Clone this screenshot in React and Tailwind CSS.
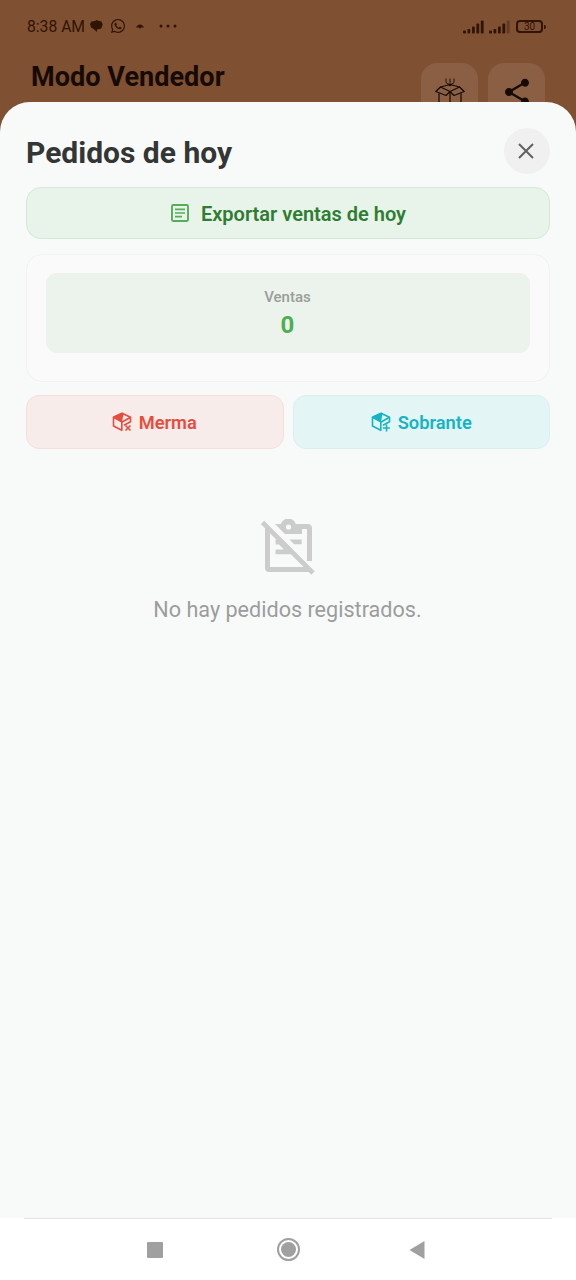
import React from "react";
import { FaWhatsapp } from "react-icons/fa";
import { MdShare } from "react-icons/md";

const SignalBars = ({ faded }) => (
    <svg width="21" height="14" viewBox="0 0 21 14" fill="currentColor">
        <rect x="0" y="10.5" width="3" height="3" rx="1" />
        <rect x="4.5" y="9" width="2.8" height="4.5" rx="1" />
        <rect x="9" y="6.5" width="2.8" height="7" rx="1" />
        <rect x="13.4" y="3.5" width="2.8" height="10" rx="1" />
        <rect x="17.8" y="0.5" width="2.8" height="13" rx="1" opacity={faded ? 0.35 : 1} />
    </svg>
);

const OpenBoxIcon = () => (
    <svg width="30" height="34" viewBox="0 0 30 34" fill="none" stroke="currentColor" strokeWidth="1.2" strokeLinejoin="round" strokeLinecap="round">
        <path d="M15 1v6M11 1v3.500L15 8l4-3.500V1M13 5.500l2 2.500 2-2.500" strokeWidth="0.9" />
        <path d="M15 13.500 5.500 9 .8 13.500 11 17.500zM15 13.500 24.500 9l4.700 4.500L19 17.500z" />
        <path d="M5.500 9 15 6.500 24.500 9M4 15.500V29l11 4 11-4V15.500M15 13.500V33" />
    </svg>
);

const ReceiptIcon = () => (
    <svg width="18" height="18" viewBox="0 0 18 18" fill="none" stroke="currentColor">
        <rect x="1" y="1" width="16" height="16" rx="1.2" strokeWidth="1.9" />
        <path d="M4 5.300h10M4 9h10M4 12.700h7" strokeWidth="1.7" />
    </svg>
);

const PackageIcon = ({ children }) => (
    <svg width="20" height="20" viewBox="0 0 20 20" fill="none" stroke="currentColor" strokeWidth="1.6" strokeLinejoin="round">
        <path d="M1.500 5.300 10 1.300 18.500 5.300V9.800L12 13.200" />
        <path d="M1.500 5.300V14L9.800 18.300V10.300L18.500 5.300" />
        <path d="M1.500 5.300 9.200 9.500 10.800 1.500z" fill="currentColor" />
        {children}
    </svg>
);

const ClipboardOffIcon = () => (
    <svg width="54" height="56" viewBox="0 0 54 56" fill="none" stroke="currentColor">
        <path d="M6.500 8v41a1.500 1.500 0 0 0 1.500 1.500h40" strokeWidth="5" />
        <path d="M42 7.500h5a1.500 1.500 0 0 1 1.500 1.500v33" strokeWidth="5" />
        <path d="M14 5h6a7.800 7.800 0 0 1 14.800 0H46v5h-5v5H24z" fill="currentColor" stroke="none" />
        <circle cx="27.5" cy="8" r="2.6" className="fill-[#f8faf9]" stroke="none" />
        <path d="M28.500 20.500h12.200v4.800h-7.500z" fill="currentColor" stroke="none" />
        <path d="M14.500 20.500h7l10 10v4.800h-17v-4.800h8.500l-5-5h-3.500z" fill="currentColor" stroke="none" />
        <path d="M1.500 3.500 52 54" strokeWidth="4.6" />
    </svg>
);

const StatusBar = () => (
    <div className="flex h-13 items-center justify-between pt-px pr-[30px] pl-[27px] text-[#301404]">
        <div className="flex items-center">
            <span className="w-[58px] pt-px text-[15.7px] whitespace-nowrap">8:38 AM</span>
            <svg className="ml-[5px]" width="13" height="12" viewBox="0 0 13 12" fill="currentColor">
                <path d="M1.500 1.500 5 1 6.500 0l2 .8 3 .7 1.200 3-1.400 4L7 9.500V12L3 8.500 1 7.500 0 4z" />
            </svg>
            <FaWhatsapp className="ml-[7px] size-[16px]" />
            <svg className="ml-[10px]" width="8" height="5" viewBox="0 0 8 5" fill="currentColor">
                <path d="M0 3.500C1 1.500 2.500.5 4 .5s3 1 4 3H5L4 5 3 3.500z" />
            </svg>
            <svg className="ml-[15px]" width="18" height="4" viewBox="0 0 18 4" fill="currentColor">
                <circle cx="2" cy="2" r="1.5" />
                <circle cx="9" cy="2" r="1.5" />
                <circle cx="16" cy="2" r="1.5" />
            </svg>
        </div>
        <div className="flex items-center">
            <SignalBars />
            <span className="w-[5px]" />
            <SignalBars faded />
            <div className="ml-[6px] flex h-[13px] w-[27px] items-center justify-center rounded-[4px] border-2 border-current text-[10px] leading-none">30</div>
            <div className="ml-px h-1 w-[2px] rounded-r bg-current" />
        </div>
    </div>
);

const AppHeader = () => (
    <header className="h-[140px] bg-[#7f5031]">
        <StatusBar />
        <div className="flex justify-between px-[31px] text-[#160b04]">
            <h1 className="mt-[9px] text-[27.1px] leading-8 font-bold whitespace-nowrap">Modo Vendedor</h1>
            <div className="mt-[11px] flex gap-[10px]">
                <div className="flex size-[57px] justify-center rounded-[16px] bg-[#8a5f43] pt-[15px]">
                    <OpenBoxIcon />
                </div>
                <div className="flex size-[57px] items-center justify-center rounded-[16px] bg-[#8a5f43]">
                    <MdShare className="size-8" />
                </div>
            </div>
        </div>
    </header>
);

const NavBar = () => (
    <nav className="h-[62px] bg-white px-6">
        <div className="flex h-full items-center border-t border-[#e2e4e3] pl-[123px] text-[#a0a0a0]">
            <div className="size-[16px] rounded-[1px] bg-current" />
            <div className="ml-[114px] flex size-[23px] items-center justify-center rounded-full border-2 border-current">
                <div className="size-[15px] rounded-full bg-current" />
            </div>
            <svg className="ml-[109px]" width="16" height="18" viewBox="0 0 16 18" fill="currentColor">
                <path d="M.500 9 15.500 0v18z" />
            </svg>
        </div>
    </nav>
);

export default function App() {
    return (
        <div className="flex h-[1280px] w-[576px] flex-col overflow-hidden bg-white font-[Roboto,sans-serif]">
            <AppHeader />
            <main className="relative -mt-[38px] flex flex-1 flex-col rounded-t-[30px] bg-[#f8faf9] px-[26px] pt-[26px]">
                <div className="flex h-[46px] items-center justify-between">
                    <h2 className="pt-[3px] text-[30px] leading-9 font-bold whitespace-nowrap text-[#333635]">Pedidos de hoy</h2>
                    <button className="flex size-[46px] items-center justify-center rounded-full bg-[#f0f0f0] pr-[2px] pb-px text-[#626262]">
                        <svg width="16" height="16" viewBox="0 0 16 16" fill="none" stroke="currentColor" strokeWidth="2">
                            <path d="m1 1 14 14M15 1 1 15" />
                        </svg>
                    </button>
                </div>

                <button className="mt-[13px] flex h-[52px] items-center justify-center rounded-[15px] border border-[#d5e7d9] bg-[#e8f3ea] text-[#2e7d32]">
                    <span className="pl-px text-[#55ad5a]"><ReceiptIcon /></span>
                    <span className="ml-[12px] pt-[2px] text-xl font-semibold whitespace-nowrap">Exportar ventas de hoy</span>
                </button>

                <section className="mt-[15px] h-[128px] rounded-[16px] border border-[#f0f3f1] bg-[#fafafa] px-[19px] pt-[18px]">
                    <div className="flex h-[80px] flex-col items-center rounded-[11px] bg-[#ebf3ec] pt-[14px] pr-px">
                        <span className="text-[15px] leading-5 font-medium text-[#999e9a]">Ventas</span>
                        <span className="mt-[4px] text-2xl leading-7 font-bold text-[#4caf50]">0</span>
                    </div>
                </section>

                <div className="mt-[13px] grid grid-cols-2 gap-[9px]">
                    <button className="flex h-[54px] items-center justify-center rounded-[13px] border border-[#f4dfdd] bg-[#f8eceb] pr-px text-[#e74c3c]">
                        <PackageIcon>
                            <path d="m13.500 13.500 5 5M18.500 13.500l-5 5" />
                        </PackageIcon>
                        <span className="ml-[7px] pt-[2px] text-[18.3px] font-semibold">Merma</span>
                    </button>
                    <button className="flex h-[54px] items-center justify-center rounded-[13px] border border-[#d9f0f0] bg-[#e3f5f5] text-[#15b4c5]">
                        <PackageIcon>
                            <path d="M15.500 12.500v7M12 16h7" />
                        </PackageIcon>
                        <span className="ml-[7px] pt-[2px] text-[18.3px] font-semibold">Sobrante</span>
                    </button>
                </div>

                <div className="mt-[70px] flex flex-col items-center pr-px">
                    <span className="text-[#cccccc]"><ClipboardOffIcon /></span>
                    <p className="mt-[21px] text-[21.6px] leading-7 whitespace-nowrap text-[#9b9d9c]">No hay pedidos registrados.</p>
                </div>
            </main>
            <NavBar />
        </div>
    );
}
